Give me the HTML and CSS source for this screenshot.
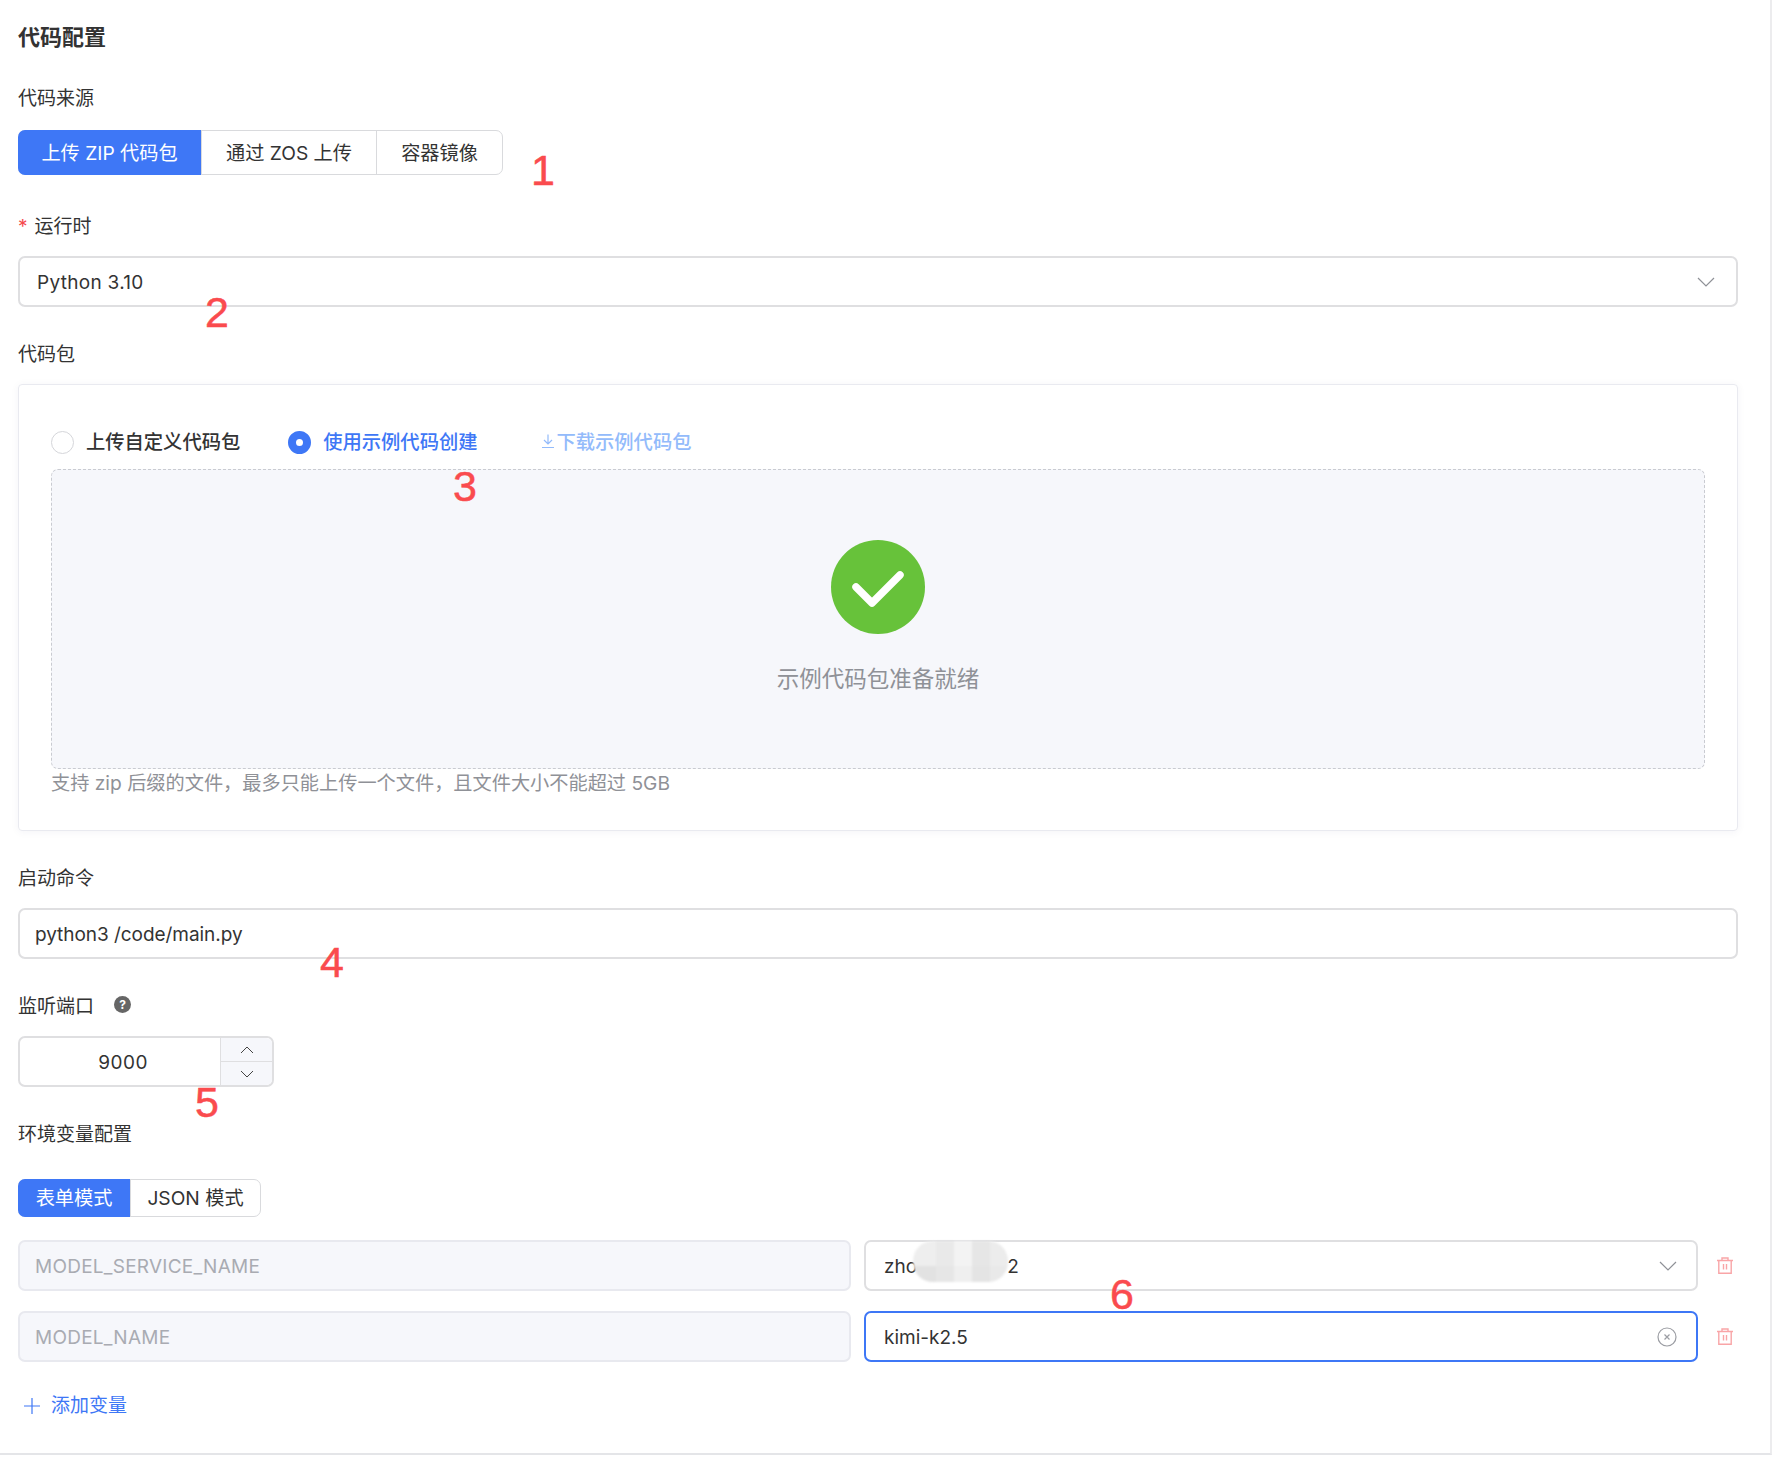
FILE: index.html
```html
<!DOCTYPE html>
<html lang="zh-CN">
<head>
  <meta charset="UTF-8" />
  <title>代码配置</title>
  <link rel="stylesheet" href="styles.css">
</head>
<body>
<div class="page">
  <h2 class="section-title">代码配置</h2>

  <div class="form-item source-item">
    <div class="label">代码来源</div>
    <div class="tabs">
      <div class="tab tab-zip active">上传 ZIP 代码包</div>
      <div class="tab tab-zos">通过 ZOS 上传</div>
      <div class="tab tab-image">容器镜像</div>
    </div>
  </div>

  <div class="form-item">
    <div class="label"><span class="required">*</span>运行时</div>
    <div class="field">
      <span class="value runtime-value">Python 3.10</span>
      <svg class="chevron" viewBox="0 0 18 10"><path d="M1 1l8 8 8-8"/></svg>
    </div>
  </div>

  <div class="form-item">
    <div class="label">代码包</div>
    <div class="card">
      <div class="radio-row">
        <span class="radio"></span>
        <span class="radio-text">上传自定义代码包</span>
        <span class="radio checked"></span>
        <span class="radio-text selected">使用示例代码创建</span>
        <a class="download">
          <svg viewBox="0 0 16 16"><path d="M8 1.5v9M4 7l4 4 4-4M2 14.5h12"/></svg>下载示例代码包
        </a>
      </div>
      <div class="dropzone">
        <svg class="ok-icon" viewBox="0 0 94 94">
          <circle cx="47" cy="47" r="47" fill="#67c23a"/>
          <path d="M25 47l16 16 28-28" fill="none" stroke="#fff" stroke-width="7.5" stroke-linecap="round" stroke-linejoin="round"/>
        </svg>
        <div class="dropzone-text">示例代码包准备就绪</div>
      </div>
      <div class="hint">支持 zip 后缀的文件，最多只能上传一个文件，且文件大小不能超过 5GB</div>
    </div>
  </div>

  <div class="form-item">
    <div class="label">启动命令</div>
    <div class="field">
      <span class="value command-value">python3 /code/main.py</span>
    </div>
  </div>

  <div class="form-item">
    <div class="label">监听端口<span class="help">?</span></div>
    <div class="number">
      <div class="number-value">9000</div>
      <div class="stepper">
        <div class="step"><svg viewBox="0 0 14 8"><path d="M1 7l6-6 6 6"/></svg></div>
        <div class="step"><svg viewBox="0 0 14 8"><path d="M1 1l6 6 6-6"/></svg></div>
      </div>
    </div>
  </div>

  <div class="env-item">
    <div class="label env-label">环境变量配置</div>
    <div class="tabs small">
      <div class="tab tab-form active">表单模式</div>
      <div class="tab tab-json">JSON 模式</div>
    </div>

    <div class="env-row">
      <div class="field disabled"><span class="value env-key">MODEL_SERVICE_NAME</span></div>
      <div class="field env-value">
        <span class="value">zho</span><span class="value tail">2</span>
        <svg class="chevron" viewBox="0 0 18 10"><path d="M1 1l8 8 8-8"/></svg>
        <div class="mosaic">
          <i class="m1"></i><i class="m2"></i><i class="m3"></i><i class="m4"></i><i class="m5"></i>
          <i class="m6"></i><i class="m7"></i><i class="m8"></i><i class="m9"></i><i class="m10"></i>
        </div>
      </div>
      <svg class="trash" viewBox="0 0 16 17"><path d="M0 3.5h16M5 3.5V1h6v2.5M1.8 3.5v12.8h12.4V3.5M6.5 7v5.5M9.5 7v5.5"/></svg>
    </div>

    <div class="env-row">
      <div class="field disabled"><span class="value env-key">MODEL_NAME</span></div>
      <div class="field env-value focused">
        <span class="value">kimi-k2.5</span>
        <svg class="clear" viewBox="0 0 20 20"><circle cx="10" cy="10" r="9"/><path d="M7.5 7.5l5 5M12.5 7.5l-5 5"/></svg>
      </div>
      <svg class="trash" viewBox="0 0 16 17"><path d="M0 3.5h16M5 3.5V1h6v2.5M1.8 3.5v12.8h12.4V3.5M6.5 7v5.5M9.5 7v5.5"/></svg>
    </div>

    <a class="add-var">
      <svg viewBox="0 0 16 16"><path d="M8 0v16M0 8h16"/></svg>添加变量
    </a>
  </div>

  <span class="mark mark-1">1</span>
  <span class="mark mark-2">2</span>
  <span class="mark mark-3">3</span>
  <span class="mark mark-4">4</span>
  <span class="mark mark-5">5</span>
  <span class="mark mark-6">6</span>
</div>
</body>
</html>
```

FILE: styles.css
```css
body {
  margin: 0;
  background: #fff;
  color: #333;
  font-family: Inter, "Noto Sans CJK SC", sans-serif;
  font-size: 19px;
}

svg {
  display: block;
  fill: none;
}

.page {
  position: relative;
  box-sizing: border-box;
  width: 1772px;
  height: 1455px;
  padding: 22px 32px 0 18px;
  border-right: 2px solid #ececee;
  border-bottom: 2px solid #e4e5e8;
}

.section-title {
  margin: 0 0 33px;
  font-size: 22px;
  line-height: 30px;
  font-weight: 700;
}

.form-item {
  margin-bottom: 34px;
}

.source-item {
  margin-bottom: 38px;
}

.source-item .label {
  margin-bottom: 17px;
}

.label {
  display: flex;
  align-items: center;
  margin-bottom: 15px;
  line-height: 28px;
}

.required {
  margin-right: 7px;
  color: #f5484d;
}

.help {
  width: 17px;
  height: 17px;
  margin: -5px 0 0 20px;
  border-radius: 50%;
  background: #666;
  color: #fff;
  font-size: 12px;
  font-weight: 700;
  line-height: 17px;
  text-align: center;
}

/* segmented tabs */
.tabs {
  display: inline-flex;
  height: 45px;
  border: 1px solid #d9dadd;
  border-radius: 7px;
  box-sizing: border-box;
  vertical-align: top;
}

.tab {
  display: flex;
  align-items: center;
  justify-content: center;
  box-sizing: border-box;
  padding-bottom: 1px;
  border-left: 1px solid #d9dadd;
  font-size: 19.2px;
}

.tab:first-child {
  border-left: 0;
}

.tab.active {
  margin: -1px 0 -1px -1px;
  border-radius: 7px 0 0 7px;
  background: #3e77f6;
  color: #fff;
}

.tab-zip { width: 183px; }
.tab-zos { width: 175px; }
.tab-image { width: 126px; }

.tabs.small {
  display: flex;
  width: 243px;
  height: 38px;
  margin-bottom: 23px;
}

.tabs.small .tab {
  padding-bottom: 2px;
}

.tab-form { width: 112px; }
.tab-json { flex: 1; }

/* inputs */
.field {
  position: relative;
  display: flex;
  align-items: center;
  box-sizing: border-box;
  height: 51px;
  padding: 0 21px 0 17px;
  border: 2px solid #dfdfe1;
  border-radius: 7px;
  background: #fff;
}

.value {
  margin-top: 2px;
  line-height: 26px;
}

.runtime-value {
  letter-spacing: 0.3px;
}

.command-value {
  margin-left: -2px;
  letter-spacing: -0.05px;
}

.env-key {
  margin-left: -2px;
  letter-spacing: 0.25px;
}

.env-value {
  padding: 0 19px 0 18px;
}

.tail {
  margin-left: 90px;
}

.chevron {
  width: 18px;
  height: 10px;
  margin-left: auto;
  stroke: #8f9197;
  stroke-width: 1.2;
}

.field.disabled {
  border-color: #e8e9ef;
  background: #f6f7fb;
  color: #a9abb2;
}

.field.focused {
  border-color: #3e77f6;
}

.clear {
  width: 20px;
  height: 20px;
  margin-left: auto;
  stroke: #9b9da3;
  stroke-width: 1.2;
}

/* code package card */
.card {
  box-sizing: border-box;
  height: 447px;
  padding: 44px 32px 0;
  border: 1px solid #e9eaf0;
  border-radius: 4px;
  box-shadow: 0 1px 8px rgba(30, 40, 90, 0.05);
}

.radio-row {
  display: flex;
  align-items: center;
  height: 26px;
  margin-bottom: 14px;
}

.radio {
  box-sizing: border-box;
  width: 23px;
  height: 23px;
  border: 1px solid #d5d6da;
  border-radius: 50%;
}

.radio.checked {
  border: 8px solid #3e77f6;
  background: #fff;
}

.radio-text {
  margin: 0 48px 2px 12px;
  font-size: 19.3px;
  font-weight: 500;
}

.radio-text.selected {
  margin: 0 62px 2px 12px;
  color: #3e77f6;
}

.download {
  display: flex;
  align-items: center;
  margin-bottom: 2px;
  color: #93bbfb;
  font-size: 19.3px;
  font-weight: 500;
}

.download svg {
  width: 16px;
  height: 16px;
  margin-right: 1px;
  stroke: #93bbfb;
  stroke-width: 1.2;
}

.dropzone {
  display: flex;
  flex-direction: column;
  align-items: center;
  box-sizing: border-box;
  height: 300px;
  padding-top: 70px;
  border: 1px dashed #c9cbd1;
  border-radius: 7px;
  background: #f6f7fb;
}

.ok-icon {
  width: 94px;
  height: 94px;
}

.dropzone-text {
  margin-top: 32px;
  color: #8f9197;
  font-size: 22.5px;
  line-height: 26px;
}

.hint {
  margin-top: 1px;
  color: #8f9197;
  font-size: 19.2px;
  line-height: 26px;
}

/* number input */
.number {
  display: flex;
  box-sizing: border-box;
  width: 256px;
  height: 51px;
  border: 2px solid #dfdfe1;
  border-radius: 7px;
}

.number-value {
  flex: 1;
  padding-left: 6px;
  letter-spacing: 0.5px;
  line-height: 49px;
  text-align: center;
}

.stepper {
  display: flex;
  flex-direction: column;
  width: 51px;
  border-left: 1px solid #dfdfe1;
  border-radius: 0 6px 6px 0;
  background: #f6f7fb;
}

.step {
  flex: 1;
  display: flex;
  align-items: center;
  justify-content: center;
}

.step + .step {
  border-top: 1px solid #dfdfe1;
}

.step svg {
  width: 14px;
  height: 8px;
  stroke: #444;
  stroke-width: 1;
}

/* env vars */
.env-label {
  margin-bottom: 30px;
}

.env-row {
  display: grid;
  grid-template-columns: 833px 834px 1fr;
  column-gap: 13px;
  align-items: center;
  margin-bottom: 20px;
}

.trash {
  width: 16px;
  height: 17px;
  margin-left: 6px;
  stroke: #f9a5a7;
  stroke-width: 1.4;
}

/* blurred-out part of the service name */
.mosaic {
  position: absolute;
  left: 47px;
  top: -1px;
  display: grid;
  grid-template-columns: 23px 18px 18px 18px 18px;
  grid-template-rows: 25px 16px;
  width: 95px;
  height: 41px;
  overflow: hidden;
  border-radius: 20px;
  filter: blur(1px);
}

.m1 { background: #eeeeee; }
.m2 { background: #e9e9e9; }
.m3 { background: #f3f3f3; }
.m4 { background: #e6e6e6; }
.m5 { background: #ececec; }
.m6 { background: #e2e2e2; }
.m7 { background: #e6e6e6; }
.m8 { background: #efefef; }
.m9 { background: #e4e4e4; }
.m10 { background: #e9e9e9; }

.add-var {
  display: flex;
  align-items: center;
  margin-top: 31px;
  color: #3e77f6;
  line-height: 26px;
}

.add-var svg {
  width: 16px;
  height: 16px;
  margin: 0 11px 0 6px;
  stroke: #3e77f6;
  stroke-width: 1.2;
}

/* red step numbers pasted over the screenshot */
.mark {
  position: absolute;
  color: #fa4b4e;
  font-family: "Liberation Sans", sans-serif;
  font-size: 43px;
  line-height: 44px;
  -webkit-text-stroke: 0.5px #fa4b4e;
}

.mark-1 { left: 531px; top: 148px; }
.mark-2 { left: 205px; top: 290px; }
.mark-3 { left: 453px; top: 464px; }
.mark-4 { left: 320px; top: 940px; }
.mark-5 { left: 195px; top: 1080px; }
.mark-6 { left: 1110px; top: 1272px; }
```
